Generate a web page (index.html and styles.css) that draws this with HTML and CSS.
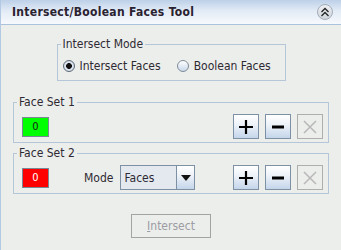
FILE: index.html
```html
<!DOCTYPE html>
<html>
<head>
  <meta charset="utf-8">
  <title>Intersect/Boolean Faces Tool</title>
  <link rel="stylesheet" href="styles.css">
</head>
<body>
  <div class="panel">
    <div class="header">
      <span class="title">Intersect/Boolean Faces Tool</span>
      <button class="collapse" title="Collapse">
        <svg width="10" height="10" viewBox="0 0 10 10">
          <polyline points="1.5,5 5,1.5 8.5,5" fill="none" stroke="#222" stroke-width="1.3"/>
          <polyline points="1.5,9 5,5.5 8.5,9" fill="none" stroke="#222" stroke-width="1.3"/>
        </svg>
      </button>
    </div>

    <div class="content">
      <fieldset class="group mode-group">
        <legend>Intersect Mode</legend>
        <div class="radio-row">
          <label class="radio">
            <input type="radio" name="mode" checked>
            <span>Intersect Faces</span>
          </label>
          <label class="radio">
            <input type="radio" name="mode">
            <span>Boolean Faces</span>
          </label>
        </div>
      </fieldset>

      <fieldset class="group face-set first">
        <legend>Face Set 1</legend>
        <div class="set-row">
          <div class="count green">0</div>
          <div class="tool-buttons">
            <button class="tool" title="Add">
              <svg width="16" height="16" viewBox="0 0 16 16"><path d="M8 1v14M1 8h14" stroke="#000" stroke-width="2.2"/></svg>
            </button>
            <button class="tool" title="Remove">
              <svg width="16" height="16" viewBox="0 0 16 16"><path d="M2 8h12" stroke="#000" stroke-width="3"/></svg>
            </button>
            <button class="tool" title="Clear" disabled>
              <svg width="16" height="16" viewBox="0 0 16 16"><path d="M2 2l12 12M14 2L2 14" stroke="#b8b8b8" stroke-width="1.5"/></svg>
            </button>
          </div>
        </div>
      </fieldset>

      <fieldset class="group face-set second">
        <legend>Face Set 2</legend>
        <div class="set-row">
          <div class="count red">0</div>
          <span class="mode-label">Mode</span>
          <div class="combo">
            <span class="combo-value">Faces</span>
            <span class="combo-arrow">
              <svg width="10" height="6" viewBox="0 0 10 6"><path d="M0 0h10L5 6z" fill="#111"/></svg>
            </span>
          </div>
          <div class="tool-buttons">
            <button class="tool" title="Add">
              <svg width="16" height="16" viewBox="0 0 16 16"><path d="M8 1v14M1 8h14" stroke="#000" stroke-width="2.2"/></svg>
            </button>
            <button class="tool" title="Remove">
              <svg width="16" height="16" viewBox="0 0 16 16"><path d="M2 8h12" stroke="#000" stroke-width="3"/></svg>
            </button>
            <button class="tool" title="Clear" disabled>
              <svg width="16" height="16" viewBox="0 0 16 16"><path d="M2 2l12 12M14 2L2 14" stroke="#b8b8b8" stroke-width="1.5"/></svg>
            </button>
          </div>
        </div>
      </fieldset>

      <div class="footer">
        <button class="action" disabled><u>I</u>ntersect</button>
      </div>
    </div>
  </div>
</body>
</html>
```

FILE: styles.css
```css
:root {
  --bg-color: #eceeeb;
  --text-color: #2e2a33;
  --group-border: #b5c6d8;
  --control-border: #7d90a4;
  --button-grad: linear-gradient(to bottom, #ffffff 0%, #eef3f9 40%, #c4d5ea 100%);
}

* {
  margin: 0;
  padding: 0;
  box-sizing: border-box;
  font-family: 'DejaVu Sans Condensed', 'DejaVu Sans', sans-serif;
}

body {
  background-color: var(--bg-color);
  color: var(--text-color);
  font-size: 12px;
}

.panel {
  width: 341px;
  height: 250px;
  background-color: var(--bg-color);
  border-left: 1px solid #b3c8e2;
}

.header {
  height: 25px;
  display: flex;
  align-items: center;
  justify-content: space-between;
  padding: 0 8px 0 11px;
  background: linear-gradient(to bottom, #bdd0e8 0%, #e2ebf6 45%, #f7f9fc 100%);
  border-bottom: 1px solid #abc1dc;
}

.title {
  font-size: 12px;
  font-weight: bold;
  letter-spacing: 0.3px;
  color: #2a2230;
}

.collapse {
  width: 16px;
  height: 16px;
  border-radius: 50%;
  border: 1px solid #a4adb8;
  background: linear-gradient(to bottom, #eef0f3, #cfd5dc);
  display: flex;
  align-items: center;
  justify-content: center;
}

.content {
  padding: 12px 12px 0 12px;
  display: flex;
  flex-direction: column;
}

.group {
  border: 1px solid var(--group-border);
  min-width: 0;
}

.group legend {
  line-height: 14px;
  padding: 0 2px;
  font-size: 12px;
  color: var(--text-color);
}

.mode-group {
  width: 229px;
  margin: 0 auto;
  padding: 6px 5px 5px 5px;
}

.mode-group legend {
  margin-left: -2px;
}

.radio-row {
  height: 18px;
  display: flex;
  align-items: center;
  gap: 16px;
}

.radio {
  display: flex;
  align-items: center;
  gap: 5px;
}

.radio input {
  appearance: none;
  width: 12px;
  height: 12px;
  border-radius: 50%;
  border: 1px solid #7f8b98;
  background: linear-gradient(to bottom, #ffffff, #c9d8ea);
}

.radio input:checked {
  border-color: #5d6873;
  background: radial-gradient(circle, #111 0, #111 2.6px, #dde6f0 3.2px, #c7d5e5 100%);
}

.face-set {
  padding: 5px 5px 3px 8px;
}

.face-set legend {
  margin-left: -5px;
}

.face-set.first {
  margin-top: 14px;
}

.face-set.second {
  margin-top: 3px;
}

.set-row {
  height: 25px;
  display: flex;
  align-items: center;
}

.count {
  width: 27px;
  height: 20px;
  border: 1px solid #7a8794;
  display: flex;
  align-items: center;
  justify-content: center;
  font-size: 11px;
}

.count.green {
  background-color: #00ff00;
  color: #1a1a1a;
}

.count.red {
  background-color: #ff0000;
  color: #ffffff;
}

.mode-label {
  margin-left: 35px;
}

.combo {
  margin-left: 7px;
  width: 75px;
  height: 25px;
  border: 1px solid var(--control-border);
  display: flex;
}

.combo-value {
  flex-grow: 1;
  background-color: #e4e9ef;
  padding-left: 3px;
  display: flex;
  align-items: center;
}

.combo-arrow {
  width: 18px;
  border-left: 1px solid var(--control-border);
  background: var(--button-grad);
  display: flex;
  align-items: center;
  justify-content: center;
}

.tool-buttons {
  margin-left: auto;
  display: flex;
  gap: 6px;
}

.tool {
  width: 26px;
  height: 25px;
  border: 1px solid var(--control-border);
  background: var(--button-grad);
  display: flex;
  align-items: center;
  justify-content: center;
}

.tool:disabled {
  border-color: #aeaeae;
  background: transparent;
}

.footer {
  margin-top: 20px;
  display: flex;
  justify-content: center;
}

.action {
  width: 80px;
  height: 24px;
  border: 1px solid #a3a3a3;
  background: transparent;
  color: #9c9ca4;
  font-size: 12px;
}

.action u {
  text-decoration-thickness: 1px;
}
```
